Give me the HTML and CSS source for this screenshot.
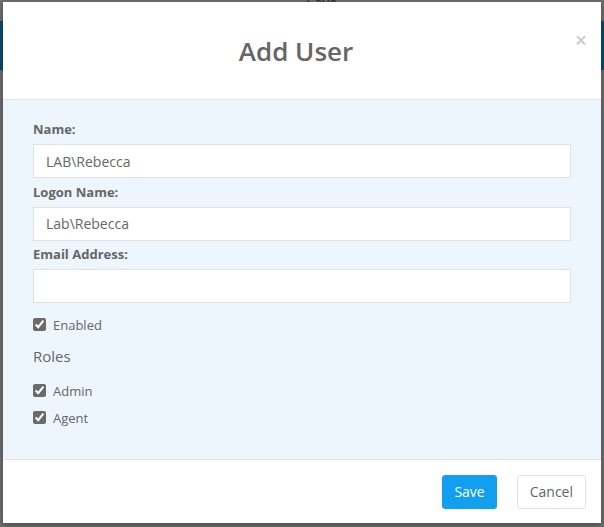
FILE: index.html
```html
<!DOCTYPE html>
<html>
<head>
<meta charset="utf-8">
<link rel="stylesheet" href="styles.css">
</head>
<body>
<div class="page">
  <div class="page-top">Save</div>
  <div class="page-band"></div>
</div>
<div class="modal">
  <div class="modal-header">
    <h2 class="modal-title">Add User</h2>
    <span class="close">&times;</span>
  </div>
  <div class="modal-body">
    <label class="field-label">Name:</label>
    <input class="field-input" type="text" value="LAB\Rebecca">
    <label class="field-label">Logon Name:</label>
    <input class="field-input" type="text" value="Lab\Rebecca">
    <label class="field-label">Email Address:</label>
    <input class="field-input" type="text" value="">
    <label class="check check-enabled"><input type="checkbox" checked><span>Enabled</span></label>
    <h4 class="roles">Roles</h4>
    <label class="check"><input type="checkbox" checked><span>Admin</span></label>
    <label class="check"><input type="checkbox" checked><span>Agent</span></label>
  </div>
  <div class="modal-footer">
    <button class="btn btn-primary">Save</button>
    <button class="btn btn-default">Cancel</button>
  </div>
</div>
</body>
</html>
```

FILE: styles.css
```css
html, body {
  margin: 0;
  padding: 0;
}
body {
  width: 604px;
  height: 527px;
  background: #6e6e6e;
  font-family: "Open Sans", "Liberation Sans", sans-serif;
  color: #666;
  overflow: hidden;
  position: relative;
}
.page-top {
  height: 21px;
  text-align: center;
  font-size: 14px;
  line-height: 6px;
  color: #2a2a2a;
  padding-left: 40px;
}
.page-band {
  height: 49px;
  background: #0b4a6f;
}
.modal {
  position: absolute;
  left: 3px;
  top: 2px;
  width: 598px;
  height: 521px;
  background: #fff;
  box-shadow: 0 2px 6px rgba(0,0,0,0.35);
  display: flex;
  flex-direction: column;
}
.modal-header {
  height: 97px;
  border-bottom: 1px solid #e3e3e3;
  display: flex;
  align-items: center;
  justify-content: center;
  position: relative;
}
.modal-title {
  margin: 0;
  font-size: 26px;
  font-weight: 600;
  color: #666;
  line-height: 36px;
  padding-right: 12px;
}
.close {
  position: absolute;
  right: 14px;
  top: 26px;
  font-size: 21px;
  line-height: 24px;
  color: #cbcbcb;
  font-weight: 600;
}
.modal-body {
  background: #edf5fd;
  padding: 19px 30px 0 30px;
  height: 340px;
  border-bottom: 1px solid #e3e3e3;
  display: flex;
  flex-direction: column;
  align-items: flex-start;
}
.field-label {
  font-size: 13px;
  font-weight: 700;
  line-height: 20px;
  margin-bottom: 5px;
  color: #666;
}
.field-input {
  box-sizing: border-box;
  width: 538px;
  height: 34px;
  border: 1px solid #e1e1e1;
  background: #fff;
  padding: 0 12px;
  margin: 0 0 3.5px 0;
  font-family: "Open Sans", "Liberation Sans", sans-serif;
  font-size: 14px;
  color: #666;
  outline: none;
}
.check {
  display: flex;
  align-items: center;
  font-size: 13px;
  line-height: 18px;
  color: #666;
  height: 18px;
}
.check input {
  margin: 0 7px 0 0;
  width: 13px;
  height: 13px;
  accent-color: #6a6a6a;
}
.check-enabled {
  margin-top: 9px;
}
.roles {
  margin: 12px 0 16px 0;
  font-size: 15px;
  font-weight: 400;
  line-height: 20px;
  color: #666;
}
.check + .check {
  margin-top: 9px;
}
.modal-footer {
  flex: 1;
  display: flex;
  justify-content: flex-end;
  align-items: flex-start;
  padding: 15px 15px 0 0;
  gap: 20px;
}
.btn {
  box-sizing: border-box;
  height: 34px;
  padding: 0 11px;
  border-radius: 3px;
  font-family: "Open Sans", "Liberation Sans", sans-serif;
  font-size: 14px;
  line-height: 32px;
  cursor: pointer;
}
.btn-primary {
  background: #139ff0;
  border: 1px solid #139ff0;
  color: #fff;
}
.btn-default {
  background: #fff;
  border: 1px solid #e3e3e3;
  color: #666;
  padding: 0 12px;
}
```
